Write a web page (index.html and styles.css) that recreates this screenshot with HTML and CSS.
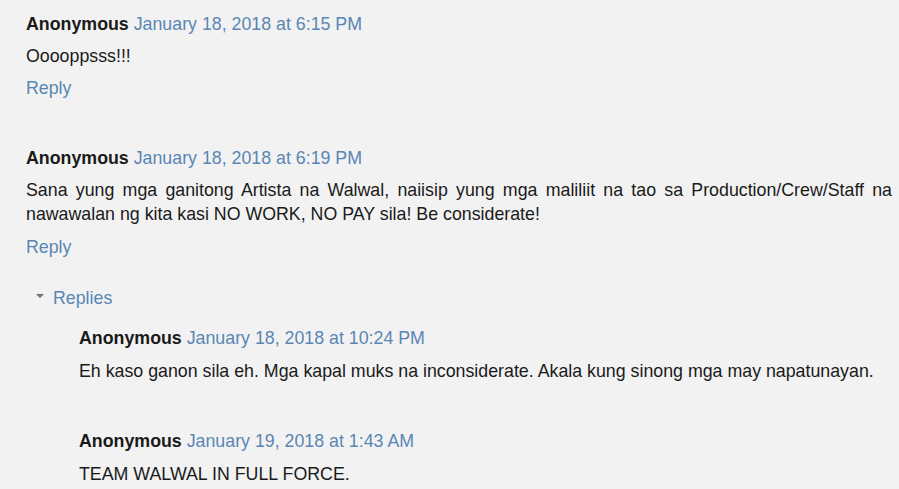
FILE: index.html
```html
<!DOCTYPE html>
<html>
<head>
<meta charset="utf-8">
<link rel="stylesheet" href="styles.css">
</head>
<body>
<div class="comments">
  <div class="comment">
    <div class="head"><span class="author">Anonymous</span> <a class="date">January 18, 2018 at 6:15 PM</a></div>
    <p class="text">Ooooppsss!!!</p>
    <div class="actions"><a class="link">Reply</a></div>
  </div>
  <div class="comment">
    <div class="head"><span class="author">Anonymous</span> <a class="date">January 18, 2018 at 6:19 PM</a></div>
    <p class="text">Sana yung mga ganitong Artista na Walwal, naiisip yung mga maliliit na tao sa Production/Crew/Staff na nawawalan ng kita kasi NO WORK, NO PAY sila! Be considerate!</p>
    <div class="actions wide"><a class="link">Reply</a></div>
    <div class="thread">
      <div class="toggle"><span class="caret"></span><a class="link">Replies</a></div>
      <div class="replies">
        <div class="reply">
          <span class="dot"></span>
          <div class="head"><span class="author">Anonymous</span> <a class="date">January 18, 2018 at 10:24 PM</a></div>
          <p class="text">Eh kaso ganon sila eh. Mga kapal muks na inconsiderate. Akala kung sinong mga may napatunayan.</p>
        </div>
        <div class="reply">
          <span class="dot"></span>
          <div class="head"><span class="author">Anonymous</span> <a class="date">January 19, 2018 at 1:43 AM</a></div>
          <p class="text">TEAM WALWAL IN FULL FORCE.</p>
        </div>
      </div>
    </div>
  </div>
</div>
</body>
</html>
```
FILE: styles.css
```css
html, body {
  margin: 0;
  padding: 0;
  background: #f2f2f2;
}
body {
  font-family: "Liberation Sans", Arial, sans-serif;
  font-size: 17.8px;
  line-height: 24px;
  color: #1a1a1a;
}
.comments {
  padding: 12px 7px 0 26px;
}
.comment {
  margin-bottom: 46px;
}
.head {
  white-space: nowrap;
}
.author {
  font-weight: bold;
  color: #1a1a1a;
}
.date, .link {
  color: #5a86b5;
  text-decoration: none;
}
.text {
  margin: 8px 0 0;
  text-align: justify;
}
.actions {
  margin-top: 8px;
}
.actions.wide {
  margin-top: 9px;
}
.thread {
  margin-top: 27px;
}
.toggle {
  display: flex;
  align-items: center;
  padding-left: 10px;
}
.caret {
  width: 0;
  height: 0;
  border-left: 4px solid transparent;
  border-right: 4px solid transparent;
  border-top: 4px solid #6f6f6f;
  margin-right: 9px;
  margin-top: -5px;
}
.replies {
  padding-left: 53px;
  margin-top: 16px;
}
.reply {
  position: relative;
  margin-bottom: 46px;
}
.reply .text {
  margin-top: 9px;
}
.reply:last-child {
  margin-bottom: 0;
}
.dot {
  position: absolute;
  left: -21px;
  top: 17px;
  width: 3px;
  height: 3px;
  border-radius: 50%;
  background: #f8f8f8;
}
```
